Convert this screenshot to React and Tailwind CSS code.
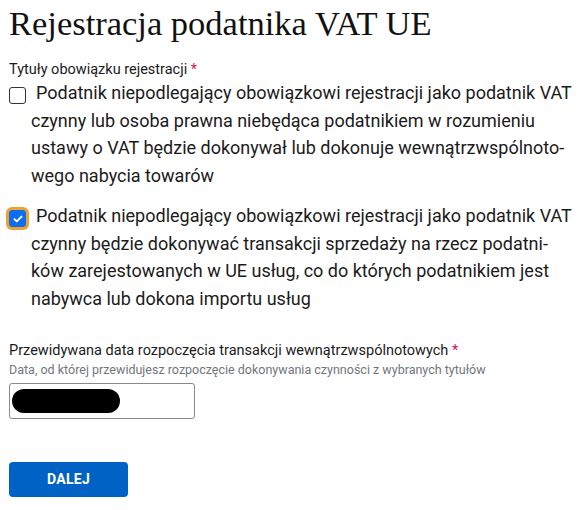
import React, { useState } from 'react';

const titles = [
  {
    id: 'wnt',
    lines: [
      'Podatnik niepodlegający obowiązkowi rejestracji jako podatnik VAT',
      'czynny lub osoba prawna niebędąca podatnikiem w rozumieniu',
      'ustawy o VAT będzie dokonywał lub dokonuje wewnątrzwspólnoto-',
      'wego nabycia towarów',
    ],
  },
  {
    id: 'uslugi',
    lines: [
      'Podatnik niepodlegający obowiązkowi rejestracji jako podatnik VAT',
      'czynny będzie dokonywać transakcji sprzedaży na rzecz podatni-',
      'ków zarejestowanych w UE usług, co do których podatnikiem jest',
      'nabywca lub dokona importu usług',
    ],
  },
];

const TitleCheckbox = ({ item, checked, focused, onToggle }) => (
  <label className="flex items-start cursor-pointer">
    <span
      className={
        'mt-[5px] ml-[6px] mr-[2px] shrink-0 rounded-[6px] p-[3px] ' +
        (focused ? 'bg-[#f0a030]' : 'bg-transparent')
      }
    >
      <span
        className={
          'flex h-[17px] w-[17px] items-center justify-center rounded-[3px] border ' +
          (checked ? 'border-[#0b6ef0] bg-[#0b6ef0]' : 'border-[#333] bg-white')
        }
      >
        {checked && (
          <svg width="10" height="8" viewBox="0 0 10 8" fill="none">
            <path d="M1.5 4.2 3.8 6.4 8.5 1.6" stroke="white" strokeWidth="2" strokeLinecap="round" strokeLinejoin="round" />
          </svg>
        )}
      </span>
      <input type="checkbox" className="sr-only" checked={checked} onChange={onToggle} />
    </span>
    <span className="text-[18px] leading-[27.5px] text-[#1b1b1b]">
      {item.lines.map((line, i) => (
        <span key={i} className={'block whitespace-nowrap ' + (i === 0 ? 'pl-[5px]' : '')}>
          {line}
        </span>
      ))}
    </span>
  </label>
);

export default function App() {
  const [checked, setChecked] = useState({ wnt: false, uslugi: true });

  return (
    <div className="min-h-[510px] bg-white px-[9px] pt-[3px] font-['Roboto',_sans-serif] text-[#1b1b1b]">
      <h1 className="font-['Liberation_Serif',_serif] text-[34.5px] leading-[40px] text-[#111]">
        Rejestracja podatnika VAT UE
      </h1>

      <fieldset className="mt-[18px]">
        <legend className="text-[14.5px] leading-[18px] text-[#1b1b1b]">
          Tytuły obowiązku rejestracji <span className="text-[#d4145a]">*</span>
        </legend>
        <div className="-ml-[9px] flex flex-col gap-[13px]">
          {titles.map((item) => (
            <TitleCheckbox
              key={item.id}
              item={item}
              checked={checked[item.id]}
              focused={item.id === 'uslugi'}
              onToggle={() => setChecked((c) => ({ ...c, [item.id]: !c[item.id] }))}
            />
          ))}
        </div>
      </fieldset>

      <div className="mt-[29px]">
        <div className="text-[14.5px] leading-[20px] text-[#1b1b1b]">
          Przewidywana data rozpoczęcia transakcji wewnątrzwspólnotowych <span className="text-[#d4145a]">*</span>
        </div>
        <div className="mt-[1px] text-[12.5px] leading-[16px] text-[#71767a]">
          Data, od której przewidujesz rozpoczęcie dokonywania czynności z wybranych tytułów
        </div>
        <div className="mt-[5px] flex h-[36px] w-[186px] items-center rounded-[3px] border border-[#8a8a8a] px-[2px]">
          <span className="h-[24px] w-[108px] rounded-full bg-black" />
        </div>
      </div>

      <button className="mt-[43px] h-[35px] w-[119px] rounded-[4px] bg-[#0062c4] text-[14px] font-bold tracking-[0.3px] text-white">
        DALEJ
      </button>
    </div>
  );
}
